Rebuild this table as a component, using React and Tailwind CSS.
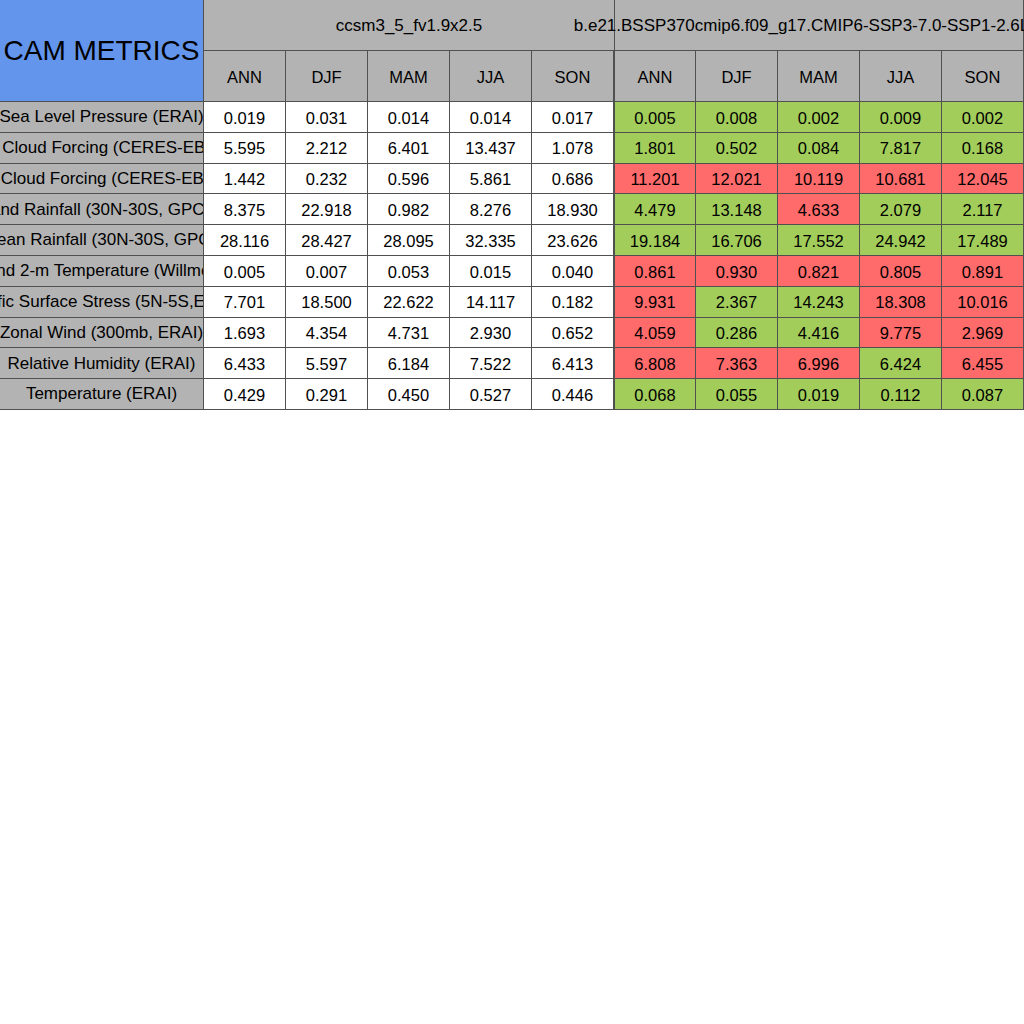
import React from 'react'

const SEASONS = ['ANN', 'DJF', 'MAM', 'JJA', 'SON'];

const ROWS = [
  { name: 'Sea Level Pressure (ERAI)', base: ['0.019', '0.031', '0.014', '0.014', '0.017'], test: ['0.005', '0.008', '0.002', '0.009', '0.002'], flags: 'GGGGG' },
  { name: 'SW Cloud Forcing (CERES-EBAF)', base: ['5.595', '2.212', '6.401', '13.437', '1.078'], test: ['1.801', '0.502', '0.084', '7.817', '0.168'], flags: 'GGGGG' },
  { name: 'LW Cloud Forcing (CERES-EBAF)', base: ['1.442', '0.232', '0.596', '5.861', '0.686'], test: ['11.201', '12.021', '10.119', '10.681', '12.045'], flags: 'RRRRR' },
  { name: 'Land Rainfall (30N-30S, GPCP)', base: ['8.375', '22.918', '0.982', '8.276', '18.930'], test: ['4.479', '13.148', '4.633', '2.079', '2.117'], flags: 'GGRGG' },
  { name: 'Ocean Rainfall (30N-30S, GPCP)', base: ['28.116', '28.427', '28.095', '32.335', '23.626'], test: ['19.184', '16.706', '17.552', '24.942', '17.489'], flags: 'GGGGG' },
  { name: 'Land 2-m Temperature (Willmott)', base: ['0.005', '0.007', '0.053', '0.015', '0.040'], test: ['0.861', '0.930', '0.821', '0.805', '0.891'], flags: 'RRRRR' },
  { name: 'Pacific Surface Stress (5N-5S,ERAI)', base: ['7.701', '18.500', '22.622', '14.117', '0.182'], test: ['9.931', '2.367', '14.243', '18.308', '10.016'], flags: 'RGGRR' },
  { name: 'Zonal Wind (300mb, ERAI)', base: ['1.693', '4.354', '4.731', '2.930', '0.652'], test: ['4.059', '0.286', '4.416', '9.775', '2.969'], flags: 'RGGRR' },
  { name: 'Relative Humidity (ERAI)', base: ['6.433', '5.597', '6.184', '7.522', '6.413'], test: ['6.808', '7.363', '6.996', '6.424', '6.455'], flags: 'RRRGR' },
  { name: 'Temperature (ERAI)', base: ['0.429', '0.291', '0.450', '0.527', '0.446'], test: ['0.068', '0.055', '0.019', '0.112', '0.087'], flags: 'GGGGG' },
];

const cell = 'flex items-center justify-center border-r border-b border-[#505050] text-black';

const App = () => {
  return (
    <div className="w-[1024px] h-[1024px] bg-white overflow-hidden" style={{ fontFamily: '"Liberation Sans", Arial, sans-serif' }}>
      <div className="grid grid-cols-[204px_repeat(10,82px)] grid-rows-[51px_51px_repeat(10,30.8px)]">
        {/* title */}
        <div className="row-span-2 flex items-center justify-center bg-[#6495ed] border-r border-b border-[#505050] text-[28px] text-black">
          CAM METRICS
        </div>

        {/* case names */}
        <div className={`${cell} col-span-5 bg-[#b3b3b3] border-r-0 text-[17px] pt-[1px]`}>
          <span className="whitespace-nowrap">ccsm3_5_fv1.9x2.5</span>
        </div>
        <div className={`${cell} col-span-5 bg-[#b3b3b3] border-l border-l-[#505050] overflow-visible text-[17px] pt-[1px]`}>
          <span className="whitespace-nowrap shrink-0">b.e21.BSSP370cmip6.f09_g17.CMIP6-SSP3-7.0-SSP1-2.6Low.1</span>
        </div>

        {/* season headers */}
        {[...SEASONS, ...SEASONS].map((s, i) => (
          <div key={i} className={`${cell} bg-[#b3b3b3] text-[16.5px] pt-[3px] ${i === 5 ? 'border-l border-l-[#505050]' : ''}`}>
            {s}
          </div>
        ))}

        {/* data rows */}
        {ROWS.map((row) => (
          <React.Fragment key={row.name}>
            <div className={`${cell} bg-[#b3b3b3] overflow-hidden text-[17px]`}>
              <span className="whitespace-nowrap shrink-0">{row.name}</span>
            </div>
            {row.base.map((v, i) => (
              <div key={'b' + i} className={`${cell} bg-white text-[16.5px] pt-[2px]`}>{v}</div>
            ))}
            {row.test.map((v, i) => (
              <div
                key={'t' + i}
                className={`${cell} text-[16.5px] pt-[2px] ${row.flags[i] === 'G' ? 'bg-[#a2cd5a]' : 'bg-[#ff6b6b]'} ${i === 0 ? 'border-l border-l-[#505050]' : ''}`}
              >
                {v}
              </div>
            ))}
          </React.Fragment>
        ))}
      </div>
    </div>
  )
}

export default App;
